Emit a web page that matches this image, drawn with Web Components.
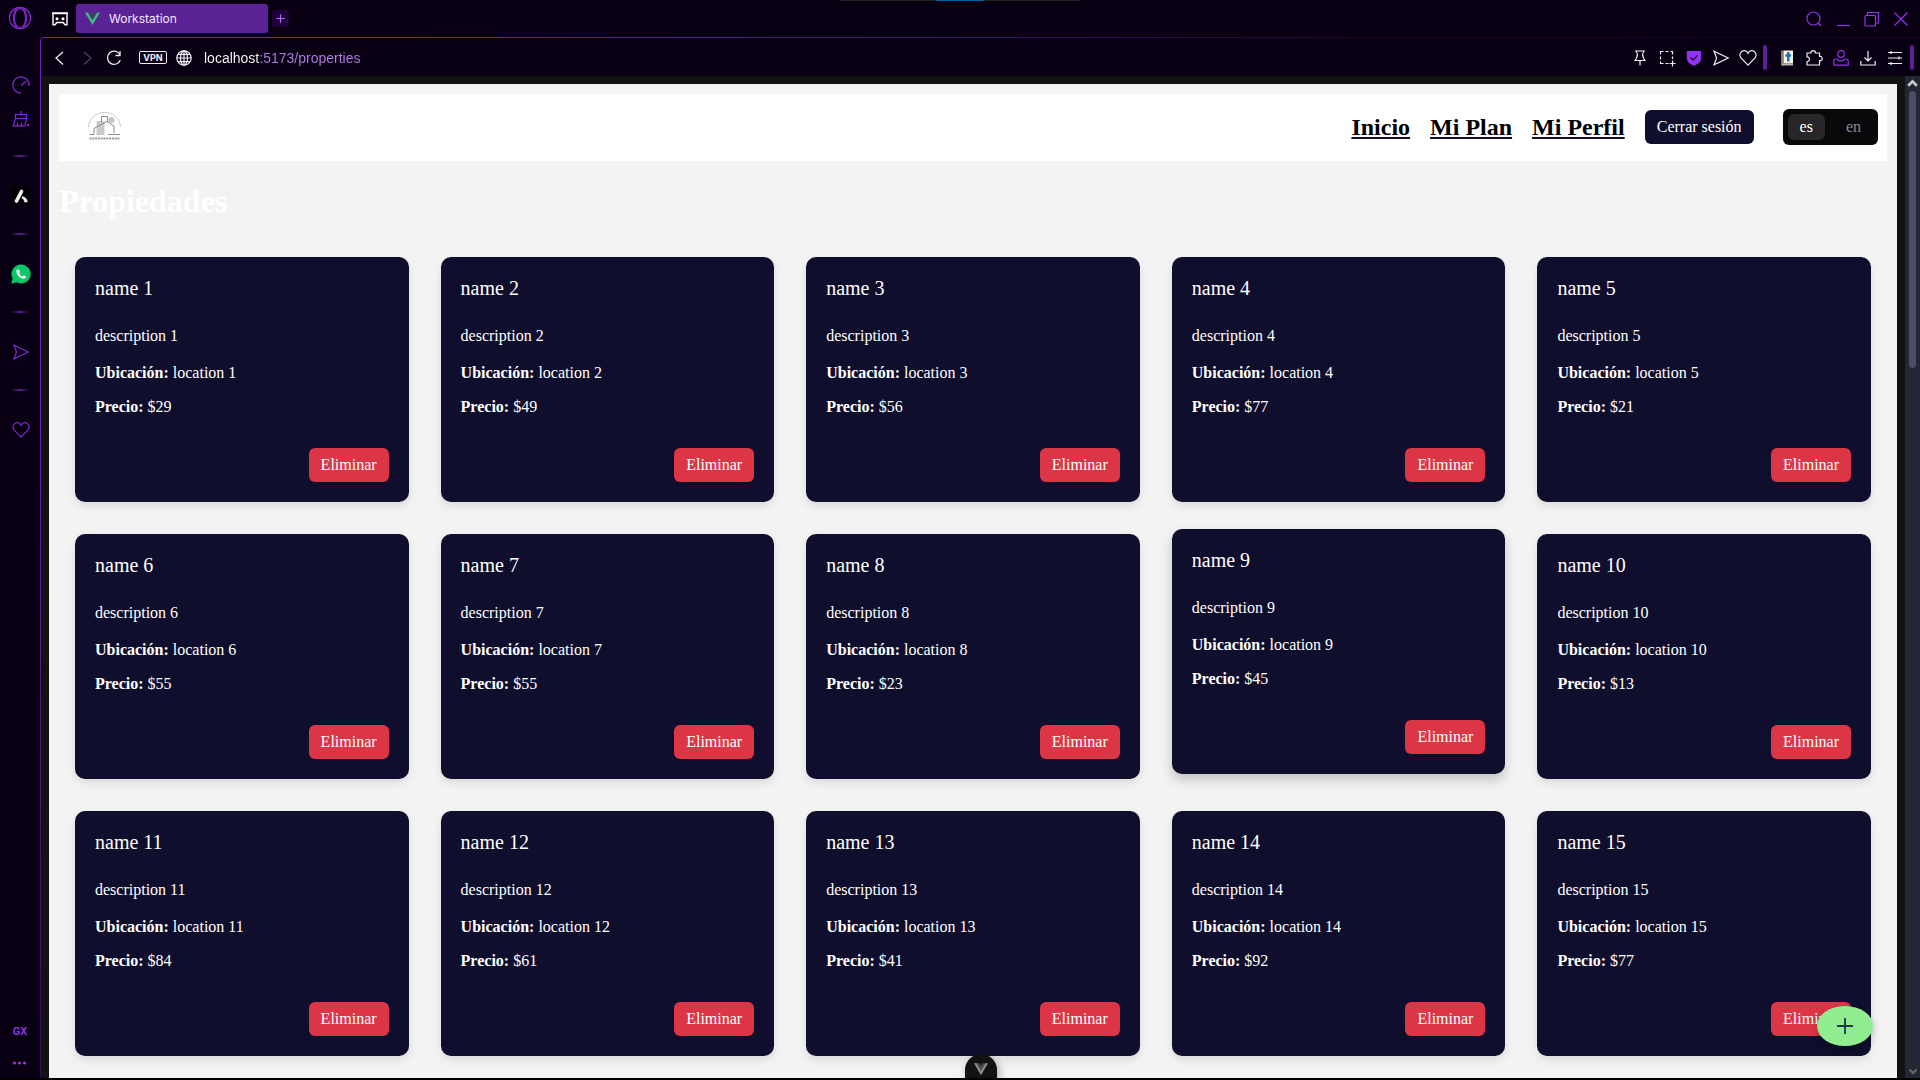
<!DOCTYPE html>
<html lang="es">
<head>
<meta charset="utf-8">
<title>Workstation</title>
<style>
  html, body { margin: 0; height: 100%; background: #000; overflow: hidden; }
  body { font-family: Inter, "Liberation Sans", sans-serif; }
</style>
</head>
<body>
<browser-window>
  <side-bar slot="side"></side-bar>
  <tab-strip slot="tabs" label="Workstation"></tab-strip>
  <address-bar slot="address" url="localhost:5173/properties"></address-bar>
  <page-view>
    <site-header slot="header"></site-header>
    <property-list heading="Propiedades"></property-list>
  </page-view>
</browser-window>

<script>
const ICONS = {
  opera: [24, '<circle cx="12" cy="12" r="10.6"/><ellipse cx="12" cy="12" rx="5.6" ry="9.6"/><path d="M9 2.6c-4.600 3.200-4.600 15.600 0 18.800M15 2.600c4.600 3.200 4.600 15.600 0 18.800"/>'],
  gauge: [18, '<path d="M9 17.200A8.200 8.200 0 1 1 17.200 9M9 9.500l5.500-4.500M17 9v1"/>'],
  broom: [18, '<path d="M9 1v3M3.500 4.500h11v4h-11zM3.500 8.500l-2.300 7.300h11.800l1.500-7.300M5 15.500l1-3M9 15.500l.8-3"/><circle cx="16" cy="15" r="1.200" fill="currentColor" stroke="none"/>'],
  send: [18, '<path d="M2 2.200 16.200 9 2 15.800 4.600 9z"/>'],
  heart: [18, '<path d="M9 16.200 2.200 9.200C-.8 5.500 2.200 1.500 5.400 1.700 7.300 1.800 8.500 3.200 9 4.300 9.500 3.200 10.700 1.800 12.600 1.700c3.200-.2 6.200 3.800 3.200 7.500z"/>'],
  aria: [18, '<rect width="18" height="18" rx="2" fill="#000" stroke="none"/><path d="M4.500 14 9.500 4.500" stroke="#f2f2f2" stroke-width="3.600" stroke-linecap="round"/><path d="M10.200 9.700c2.300-.2 5 2.200 5.100 5.300h-2.800c-.2-2.200-.8-3-2.300-3.500z" fill="#f2f2f2" stroke="#f2f2f2" stroke-width=".6"/>'],
  whatsapp: [20, '<path d="M10 .5A9.500 9.500 0 1 1 5.500 18.300L.3 19.700 1.600 14.600A9.500 9.500 0 0 1 10 .5z" fill="#08c768" stroke="none"/><path d="M6.800 5.200c-.9.300-1.500 1.200-1.400 2.300.3 3.600 3.500 6.900 7.200 7.300 1.200.1 2.200-.7 2.500-1.700.1-.5-1.900-1.500-2.400-1.500-.4 0-.7.900-1.100 1-.8 0-3.200-2.200-3.400-3.100 0-.4.800-.8.800-1.200.1-.5-.8-3.200-2.200-3.100z" fill="#fff" stroke="none"/>'],
  dots: [18, '<g fill="currentColor" stroke="none"><circle cx="3.500" cy="9" r="1.600"/><circle cx="8.500" cy="9" r="1.600"/><circle cx="13.500" cy="9" r="1.600"/></g>'],
  gamepad: [18, '<path d="M2 3.500h14v11.300h-2L12.200 12.500H5.800L4 14.800H2z" stroke-width="1.400"/><path d="M1 3h16" stroke-width="1.400"/><circle cx="6" cy="8.800" r="1.500" fill="currentColor" stroke="none"/><circle cx="12" cy="8.800" r="1.500" fill="currentColor" stroke="none"/>'],
  vue: [16, '<path d="M0 1.500h3.200L8 9.700l4.800-8.200H16L8 15z" fill="var(--vue-a,#42b883)" stroke="none"/><path d="M3.200 1.500h3L8 4.600l1.800-3.100h3L8 9.700z" fill="var(--vue-b,#35495e)" stroke="none"/>'],
  plus: [18, '<path d="M9 4.500v9M4.500 9h9"/>'],
  add: [18, '<path d="M9 1v16M1 9h16" stroke-width="1.800"/>'],
  back: [18, '<path d="M12 3 5 9l7 6.500" stroke-width="1.300"/>'],
  forward: [18, '<path d="M6 3l7 6-7 6.500"/>'],
  reload: [18, '<path d="M14.500 5A6.600 6.600 0 1 0 15.300 11M15 2v4.500h-4.500" stroke-width="1.300"/>'],
  globe: [18, '<circle cx="9" cy="9" r="7.200"/><ellipse cx="9" cy="9" rx="3.500" ry="7.200"/><path d="M9 1.800v14.400M1.800 9h14.400M3 5.300h12M3 12.700h12"/>'],
  pin: [18, '<path d="M4 2h10M5 2c2 2.500 2 4.500 0 8L4 11.500h10L13 10c-2-3.500-2-5.500 0-8M9 11.500V16.500"/>'],
  snap: [18, '<path d="M2.500 5.500v-3h3M7.500 2.500h3M12.500 2.500h2v3M2.500 7.500v3M14.500 7.500v2.500M2.500 12.500v2h3M7.500 14.500h3M14.500 11.500v6M11.500 14.500h6"/>'],
  shield: [18, '<path d="M2.500 2h13a.6.600 0 0 1 .6.600V9c0 4-3.500 6.500-7.100 7.700C5.400 15.500 1.900 13 1.900 9V2.600A.6.600 0 0 1 2.500 2z" fill="#9333f5" stroke="none"/><path d="m5.500 8.500 2.600 2.600 4.400-4.800" stroke="#0d0115"/>'],
  bible: [18, '<path d="M3 1.500h2.500v15H3z" fill="#8b7a72" stroke="none"/><path d="M5.500 1.500H15v13H5.500z" fill="#f6f2e4" stroke="none"/><path d="M4 14.500h11v2H4z" fill="#b7b7ab" stroke="none"/><path d="M10.300 3v9.500M7.500 6.500h5.500" stroke="#1672b8" stroke-width="2.400"/>'],
  puzzle: [18, '<path d="M2 4h4C5.200.800 11.200.800 10.400 4H14.500V7.500c3.600-.9 3.600 5 0 4.200V16H2V12.500c3.200.5 3.200-5 0-4.500z" stroke-linejoin="round"/>'],
  person: [18, '<circle cx="9" cy="5" r="3.300"/><path d="M5.500 10H3.800c-1.200 0-2 .8-2 2v4.200h14.400V12c0-1.200-.8-2-2-2H12.500C11.800 12.600 6.200 12.600 5.500 10z" stroke-linejoin="round"/>'],
  download: [18, '<path d="M9 2v9.500M5.500 8.500 9 12l3.500-3.500M1.800 12v4h14.400v-4"/>'],
  sliders: [18, '<path d="M2 3.500h14M2 9h14M2 14.500h14"/><path d="M5 2v3M13 7.500v3M5 13v3"/>'],
  search: [18, '<circle cx="8.500" cy="8.500" r="6.500"/><path d="m13.500 13.500 2.500 2.500"/>'],
  minimize: [18, '<path d="M3 15.500h13"/>'],
  restore: [18, '<rect x="2" y="5.500" width="10.500" height="10.500" rx="1"/><path d="M4.500 5V2.500h11v10.500H13"/>'],
  close: [18, '<path d="m2.500 2.500 13 13M15.500 2.500l-13 13"/>'],
  city: [36, '<g stroke="none"><path d="M10.500 12h8v14h-8z" fill="#cacaca"/><circle cx="25.500" cy="11" r="3" fill="#c4c4c4"/></g><g stroke="#7d7d7d" stroke-width=".9"><path d="M2.500 18C3 9 10 3.500 18.500 3.500S34 9 34.500 18" stroke="#c2c2c2"/><path d="M3.500 25.500h4.500v-6l13-7 7 4.500v7M22 25.500h12M15.500 13V7.500h6V13"/></g><path d="M3.500 29.500h30" stroke="#999" stroke-width="1.800" stroke-dasharray="2 .8"/>'],
  up: [14, '<path d="m3 9 4-4 4 4" stroke-width="2.600"/>'],
  down: [14, '<path d="m3.500 5.500 3.500 3.500 3.500-3.500" stroke-width="2.200"/>'],
};

/** Base class: renders a template string into an open shadow root. */
class Base extends HTMLElement {
  connectedCallback() {
    if (this.shadowRoot) return;
    this.attachShadow({ mode: 'open' }).innerHTML =
      `<style>*{box-sizing:border-box}button{font:inherit;color:inherit;background:none;border:0;padding:0;cursor:pointer}</style>${this.render()}`;
  }
}
const icon = (name, size = 18) => `<ui-icon name="${name}" size="${size}"></ui-icon>`;
const iconButton = (name, label, size) => `<button aria-label="${label}">${icon(name, size)}</button>`;

class UiIcon extends Base {
  render() {
    const [box, body] = ICONS[this.getAttribute('name')];
    const size = this.getAttribute('size');
    return `<style>:host{display:block;flex:none}svg{display:block}</style>
      <svg width="${size}" height="${size}" viewBox="0 0 ${box} ${box}" fill="none" stroke="currentColor" stroke-width="1.200" aria-hidden="true">${body}</svg>`;
  }
}

class BrowserWindow extends Base {
  render() {
    return `<style>
      :host{display:flex;position:relative;height:calc(100vh - 2px);background:#080012}
      .main{flex:1;min-width:0;display:flex;flex-direction:column}
      .panel{flex:1;min-height:0;display:flex;flex-direction:column;position:relative;padding:1px 0 0 1px}
      .panel::before{content:"";position:absolute;inset:0;pointer-events:none;border:solid #6f20b0;border-width:1px 0 0 1px;border-top-left-radius:4px;
        mask-image:linear-gradient(135deg,#000 0,#000 12%,rgba(0,0,0,.2) 45%,rgba(0,0,0,.1) 60%,#000 100%)}
      .notch{position:absolute;top:0;left:50%;width:240px;height:1px;margin-left:-120px;background:linear-gradient(90deg,#222 40%,#0063b1 40% 60%,#222 60%)}
    </style>
    <slot name="side"></slot>
    <div class="main"><slot name="tabs"></slot><div class="panel"><slot name="address"></slot><slot></slot></div></div>
    <div class="notch"></div>`;
  }
}

class SideBar extends Base {
  render() {
    return `<style>
      :host{display:flex;flex-direction:column;align-items:center;width:40px;color:#8128d0}
      button{display:grid;place-items:center;width:40px;height:39px;padding-left:1px}
      .logo{height:36px;padding:0}.tool{height:34px}
      .tools{padding:32px 0 1px}
      hr{width:18px;height:2px;margin:18px 0 19px;border:0;background:linear-gradient(90deg,transparent,#5d1c97,transparent)}
      .gx{margin-top:auto;height:32px;padding:0;font:700 10px Inter,sans-serif;color:#9333ea}
      .more{height:31px;padding:0;color:#9333ea}
    </style>
    <button class="logo" aria-label="Opera GX">${icon('opera', 24)}</button>
    <div class="tools"><button class="tool" aria-label="GX Control">${icon('gauge')}</button><button class="tool" aria-label="GX Cleaner">${icon('broom')}</button></div>
    <hr>${iconButton('aria', 'Aria', 18)}
    <hr>${iconButton('whatsapp', 'WhatsApp', 20)}
    <hr>${iconButton('send', 'Flow', 18)}
    <hr>${iconButton('heart', 'Favoritos', 18)}
    <button class="gx">GX</button>
    <button class="more" aria-label="Más">${icon('dots')}</button>`;
  }
}

class TabStrip extends Base {
  render() {
    return `<style>
      :host{display:flex;align-items:center;height:37px;padding:0 10px 0 11px;color:#9333ea}
      .home{color:#fff}
      .tab{display:flex;align-items:center;gap:9px;width:192px;height:29px;margin:0 4px 0 7px;padding:0 9px;border-radius:3px;background:#5b2295;color:#f1e8fb;font-size:12px;line-height:16px}
      .new{display:grid;place-items:center;width:17px;height:17px;border-radius:3px;background:#20003a;color:#b06cf5}
      .controls{display:flex;gap:11px;margin-left:auto}
    </style>
    <button class="home" aria-label="GX Corner">${icon('gamepad')}</button>
    <button class="tab">${icon('vue', 15)}<span>${this.getAttribute('label')}</span></button>
    <button class="new" aria-label="Nueva pestaña">${icon('plus', 17)}</button>
    <div class="controls">${iconButton('search', 'Buscar')}${iconButton('minimize', 'Minimizar')}${iconButton('restore', 'Restaurar')}${iconButton('close', 'Cerrar')}</div>`;
  }
}

class AddressBar extends Base {
  render() {
    return `<style>
      :host{display:flex;align-items:center;box-sizing:border-box;height:38px;padding:1px 6px 0 10px;color:#f3ecfa}
      .nav{display:flex;gap:9px}
      .off{color:#51445c}
      .vpn{width:28px;height:13px;margin:0 8px 0 16px;border:1px solid currentColor;border-radius:2px;font:700 9px/11px Inter,sans-serif}
      input{flex:1;min-width:0;margin:0 11px;padding:0;border:0;outline:0;font:14px/20px "Liberation Sans",sans-serif;
        background:linear-gradient(90deg,#fff 55px,#b47be8 55px) text;-webkit-text-fill-color:transparent}
      .tools{display:flex;align-items:center;gap:9px}
      .bar{width:4px;height:25px;margin:0 2px 0 -3px;border-radius:2px;background:#5b2295}
      .bar:last-child{margin-right:0}
      .user{color:#9333ea}
    </style>
    <div class="nav">${iconButton('back', 'Atrás')}<button class="off" aria-label="Adelante">${icon('forward')}</button>${iconButton('reload', 'Recargar')}</div>
    <button class="vpn">VPN</button>${iconButton('globe', 'Información del sitio')}
    <input type="text" aria-label="Dirección" value="${this.getAttribute('url')}">
    <div class="tools">
      ${iconButton('pin', 'Fijar')}${iconButton('snap', 'Captura')}${iconButton('shield', 'Bloqueador')}${iconButton('send', 'Enviar')}${iconButton('heart', 'Favorito')}
      <span class="bar"></span>
      ${iconButton('bible', 'Extensión')}${iconButton('puzzle', 'Extensiones')}<button class="user" aria-label="Perfil">${icon('person')}</button>${iconButton('download', 'Descargas')}${iconButton('sliders', 'Configuración')}
      <span class="bar"></span>
    </div>`;
  }
}

class PageView extends Base {
  render() {
    return `<style>
      :host{display:flex;flex:1;min-height:0;position:relative;font-family:"Liberation Serif",serif;font-size:16px}
      .viewport{flex:1;min-width:0;position:relative;overflow:hidden;padding:8px 8px 0;background:#121212}
      .sheet{padding:10px;background:#f3f3f3}
      .scroll{display:flex;flex-direction:column;align-items:center;width:15px;background:#232734;color:#c9c9c9}
      .thumb{width:7px;height:277px;border-radius:4px;background:#4c4c66}
      .end{margin-top:auto;color:#666}
      .fab{position:absolute;right:32px;bottom:32px;display:grid;place-items:center;width:56px;height:40px;border-radius:50%;background:#90ee90;color:#213547;box-shadow:0 4px 8px rgba(0,0,0,.2)}
      .devtools{position:absolute;left:50%;bottom:0;display:grid;place-items:center;width:32px;height:24px;padding-top:6px;margin-left:-16px;border-radius:16px 16px 0 0;background:#121212;box-shadow:2px 2px 8px rgba(0,0,0,.3);--vue-a:#8c8c8c;--vue-b:#4d4d4d}
    </style>
    <div class="viewport">
      <div class="sheet"><slot name="header"></slot><slot></slot></div>
      <button class="fab" aria-label="Agregar propiedad">${icon('add', 18)}</button>
    </div>
    <div class="scroll">${icon('up', 15)}<div class="thumb"></div><div class="end">${icon('down', 14)}</div></div>
    <button class="devtools" aria-label="Vue DevTools">${icon('vue', 14)}</button>`;
  }
}

class SiteHeader extends Base {
  render() {
    return `<style>
      :host{display:flex;align-items:center;box-sizing:border-box;height:67px;padding:0 9px 1px 27px;background:#fff}
      nav{display:flex;align-items:center;gap:20px;margin-left:auto}
      nav a{color:#000;font-size:24px;line-height:28px;font-weight:700;text-decoration:underline #0f0e2c}
      .logout{height:34px;padding:0 12px;border-radius:6px;background:#0f0e2c;color:#fff}
      .lang{display:flex;gap:9px;margin-left:29px;padding:5px;border-radius:6px;background:#09090b;color:#8b8b8f}
      .lang button{height:26px;padding:0 12px;border-radius:6px}
      .lang .on{background:#27272a;color:#fff}
    </style>
    ${icon('city', 36)}
    <nav><a href="#inicio">Inicio</a><a href="#plan">Mi Plan</a><a href="#perfil">Mi Perfil</a><button class="logout">Cerrar sesión</button></nav>
    <div class="lang" role="group" aria-label="Idioma"><button class="on" aria-pressed="true">es</button><button aria-pressed="false">en</button></div>`;
  }
}

class PropertyCard extends Base {
  render() {
    return `<style>
      :host{display:flex;flex-direction:column;padding:20px;border-radius:10px;background:#0f0e2c;color:#fff;line-height:18px;box-shadow:0 4px 8px rgba(0,0,0,.1)}
      :host([raised]){transform:translateY(-5px);box-shadow:0 6px 12px rgba(0,0,0,.2)}
      h2{margin:0 0 24px;font-size:20px;line-height:23px;font-weight:400}
      p{margin:0 0 16px}
      .about{line-height:24px}
      button{align-self:flex-end;height:34px;margin-top:16px;padding:0 12px;border-radius:6px;background:#dc3545}
    </style>
    <h2><slot name="name"></slot></h2>
    <p class="about"><slot name="description"></slot></p>
    <p><strong>Ubicación:</strong> <slot name="location"></slot></p>
    <p><strong>Precio:</strong> <slot name="price"></slot></p>
    <button>Eliminar</button>`;
  }
}

class PropertyList extends Base {
  render() {
    const prices = [29, 49, 56, 77, 21, 55, 55, 23, 45, 13, 84, 61, 41, 92, 77];
    const cards = prices.map((price, i) => {
      const n = i + 1;
      return `<property-card${n === 9 ? ' raised' : ''}><span slot="name">name ${n}</span><span slot="description">description ${n}</span><span slot="location">location ${n}</span><span slot="price">$${price}</span></property-card>`;
    }).join('');
    return `<style>
      :host{display:block}
      h1{margin:22px 0 21px;font-size:32px;line-height:37px;font-weight:700;color:#fff}
      .grid{display:grid;grid-template-columns:repeat(auto-fill,minmax(300px,1fr));gap:32px;padding:16px}
    </style>
    <h1>${this.getAttribute('heading')}</h1>
    <div class="grid">${cards}</div>`;
  }
}

customElements.define('ui-icon', UiIcon);
customElements.define('side-bar', SideBar);
customElements.define('tab-strip', TabStrip);
customElements.define('address-bar', AddressBar);
customElements.define('site-header', SiteHeader);
customElements.define('property-card', PropertyCard);
customElements.define('property-list', PropertyList);
customElements.define('page-view', PageView);
customElements.define('browser-window', BrowserWindow);
</script>
</body>
</html>
